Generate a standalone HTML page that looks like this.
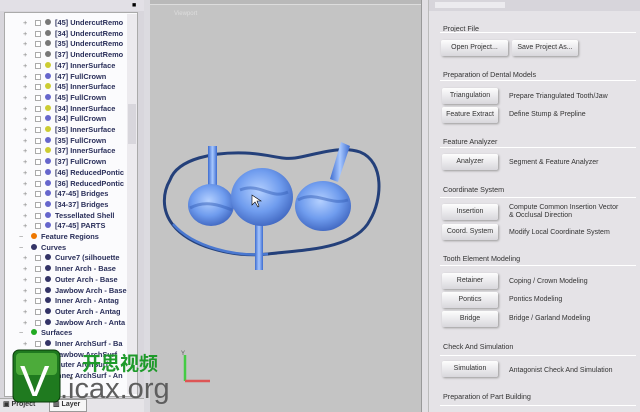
<!DOCTYPE html>
<html><head><meta charset="utf-8"><style>
*{margin:0;padding:0;box-sizing:border-box}
body{width:640px;height:412px;overflow:hidden;background:#c4c4c4;font-family:"Liberation Sans",sans-serif;position:relative}
.abs{position:absolute}
#left{left:0;top:0;width:144px;height:412px;background:#d8d6dc}
#tree{left:4px;top:12px;width:134px;height:385px;background:#fbfbfd;border:1px solid #aaa;overflow:hidden}
.row{position:absolute;height:11px;font-size:7.4px;font-weight:bold;color:#2a2f5a;white-space:nowrap;line-height:11px}
.row i{display:inline-block;width:6px;height:6px;border:1px solid #aaa;background:#fff;margin-right:4px;vertical-align:-1px}
.row b{display:inline-block;width:6px;height:6px;border-radius:50%;margin-right:4px;vertical-align:0}
.row s{display:inline-block;color:#888;text-decoration:none;width:12px;font-weight:normal}
#sb{left:127px;top:14px;width:10px;height:380px;background:#eceaee}
#right{left:428px;top:0;width:212px;height:412px;background:#e5e3e7;border-left:1px solid #bbb}
.hd{position:absolute;left:443px;font-size:7.2px;color:#333}
.ln{position:absolute;left:440px;width:196px;height:1px;background:#c8c6cc;border-bottom:1px solid #fff}
.bt{position:absolute;height:16px;font-size:7px;color:#333;text-align:center;line-height:16px;border-radius:2px;background:linear-gradient(#fdfdfd,#d8d7dc);box-shadow:1px 1px 2px #999}
.tx{position:absolute;left:509px;font-size:7px;color:#333;line-height:8px}
</style></head><body>
<div class="abs" style="left:144px;top:0;width:6px;height:412px;background:#dcdbe0"></div>
<div class="abs" style="left:150px;top:0;width:274px;height:5px;background:#b9b9b9;border-bottom:1px solid #ddd"></div>
<div class="abs" style="left:174px;top:11px;font-size:6px;color:#ddd">Viewport</div>
<div class="abs" style="left:421px;top:0;width:7px;height:412px;background:#e2e0e4;border-left:1px solid #999"></div>

<div id="left" class="abs">
<div class="abs" style="left:0;top:0;width:144px;height:11px;background:#e2e0e6"></div>
<div class="abs" style="left:132px;top:2px;font-size:7px">■</div>
<div id="tree" class="abs"></div>
<div id="sb" class="abs"><div class="abs" style="left:1px;top:90px;width:8px;height:40px;background:#d8d6dc"></div></div>
<div class="abs" style="left:0;top:398px;width:144px;height:14px;background:#e6e4e8;border-top:1px solid #aaa"></div>
<div class="abs" style="left:3px;top:400px;font-size:7px;font-weight:bold;color:#333">▣ Project</div>
<div class="abs" style="left:49px;top:399px;width:38px;height:13px;border:1px solid #999;background:#f6f6f6;font-size:7px;font-weight:bold;color:#333;padding-left:3px">▥ Layer</div>
</div>

<div id="right" class="abs">
<div class="abs" style="left:0;top:0;width:212px;height:11px;background:#d7d5db"></div>
<div class="abs" style="left:6px;top:2px;width:70px;height:6px;background:#ecebef"></div>
</div>
<div class="hd" style="top:24px">Project File</div><div class="ln" style="top:32px"></div>
<div class="bt" style="left:441px;top:40px;width:67px">Open Project...</div>
<div class="bt" style="left:512px;top:40px;width:66px">Save Project As...</div>
<div class="hd" style="top:70px">Preparation of Dental Models</div><div class="ln" style="top:80px"></div>
<div class="bt" style="left:442px;top:88px;width:56px">Triangulation</div><div class="tx" style="top:93px">Prepare Triangulated Tooth/Jaw</div>
<div class="bt" style="left:442px;top:107px;width:56px">Feature Extract</div><div class="tx" style="top:111px">Define Stump &amp; Prepline</div>
<div class="hd" style="top:137px">Feature Analyzer</div><div class="ln" style="top:147px"></div>
<div class="bt" style="left:442px;top:154px;width:56px">Analyzer</div><div class="tx" style="top:159px">Segment &amp; Feature Analyzer</div>
<div class="hd" style="top:185px">Coordinate System</div><div class="ln" style="top:197px"></div>
<div class="bt" style="left:442px;top:204px;width:56px">Insertion</div><div class="tx" style="top:204px">Compute Common Insertion Vector<br>&amp; Occlusal Direction</div>
<div class="bt" style="left:442px;top:224px;width:56px">Coord. System</div><div class="tx" style="top:229px">Modify Local Coordinate System</div>
<div class="hd" style="top:254px">Tooth Element Modeling</div><div class="ln" style="top:265px"></div>
<div class="bt" style="left:442px;top:273px;width:56px">Retainer</div><div class="tx" style="top:278px">Coping / Crown Modeling</div>
<div class="bt" style="left:442px;top:292px;width:56px">Pontics</div><div class="tx" style="top:296px">Pontics Modeling</div>
<div class="bt" style="left:442px;top:311px;width:56px">Bridge</div><div class="tx" style="top:315px">Bridge / Garland Modeling</div>
<div class="hd" style="top:342px">Check And Simulation</div><div class="ln" style="top:355px"></div>
<div class="bt" style="left:442px;top:361px;width:56px">Simulation</div><div class="tx" style="top:367px">Antagonist Check And Simulation</div>
<div class="hd" style="top:392px">Preparation of Part Building</div><div class="ln" style="top:405px"></div>

<svg class="abs" style="left:0;top:0" width="640" height="412">
<defs>
<radialGradient id="g" cx="45%" cy="40%" r="65%"><stop offset="0" stop-color="#b4d0ff"/><stop offset=".55" stop-color="#6f9cee"/><stop offset="1" stop-color="#3c62bc"/></radialGradient>
<linearGradient id="p" x1="0" x2="1"><stop offset="0" stop-color="#3d6cd0"/><stop offset=".5" stop-color="#a8c8ff"/><stop offset="1" stop-color="#3d6cd0"/></linearGradient>
</defs>
<path d="M170 180 C178 158 215 152 245 153 C270 154 280 160 295 158 C315 155 340 145 360 152 C385 162 382 200 370 220 C355 250 300 250 268 254 C230 258 188 245 173 225 C161 210 163 192 170 180 Z" fill="none" stroke="#24407a" stroke-width="3"/>
<path d="M173 224 C193 247 235 257 268 254" fill="none" stroke="#4a78d0" stroke-width="2.5"/>
<rect x="208" y="146" width="9" height="40" fill="url(#p)"/>
<rect x="255" y="220" width="8" height="50" fill="url(#p)"/>
<path d="M341 142 L350 146 L338 182 L330 179 Z" fill="url(#p)"/>
<ellipse cx="211" cy="205" rx="23" ry="21" fill="url(#g)"/>
<ellipse cx="323" cy="206" rx="28" ry="25" fill="url(#g)"/>
<ellipse cx="262" cy="197" rx="31" ry="29" fill="url(#g)"/>
<path d="M190 208 C205 200 220 205 232 210 M298 200 C315 190 330 206 348 200 M240 190 C260 182 270 200 288 192" stroke="#3560b8" stroke-width="3" fill="none" opacity=".5"/>
<path d="M252 195 L252 205 L255 202 L258 207 L259 206 L257 201 L261 201 Z" fill="#fff" stroke="#000" stroke-width=".6"/>
<line x1="185" y1="355" x2="185" y2="381" stroke="#4c4" stroke-width="2.5"/>
<line x1="185" y1="381" x2="210" y2="381" stroke="#d55" stroke-width="2.5"/>
<text x="181" y="355" font-size="6" fill="#555" font-family="Liberation Sans">Y</text>
<rect x="13" y="350" width="47" height="52" rx="6" fill="#1f7a1f" stroke="#0a3a0a"/>
<rect x="16" y="353" width="41" height="22" rx="4" fill="#4cab3a"/>
<text x="20" y="396" font-size="44" fill="#fff" font-family="Liberation Sans">V</text>
<text x="82" y="370" font-size="19" font-weight="bold" fill="#1e9a2a" font-family="Liberation Sans,Noto Sans CJK SC,sans-serif">开思视频</text>
<text x="60" y="398" font-size="29" fill="#5e5e5e" font-family="Liberation Sans">.icax.org</text>
</svg>
<script>
var rows=[["[45] UndercutRemo","#777",1],["[34] UndercutRemo","#777",1],["[35] UndercutRemo","#777",1],["[37] UndercutRemo","#777",1],["[47] InnerSurface","#cc3",1],["[47] FullCrown","#66c",1],["[45] InnerSurface","#cc3",1],["[45] FullCrown","#66c",1],["[34] InnerSurface","#cc3",1],["[34] FullCrown","#66c",1],["[35] InnerSurface","#cc3",1],["[35] FullCrown","#66c",1],["[37] InnerSurface","#cc3",1],["[37] FullCrown","#66c",1],["[46] ReducedPontic","#66c",1],["[36] ReducedPontic","#66c",1],["[47-45] Bridges","#66c",1],["[34-37] Bridges","#66c",1],["Tessellated Shell","#66c",1],["[47-45] PARTS","#66c",1],["Feature Regions","#e70",0],["Curves","#336",0],["Curve7 (silhouette","#336",1],["Inner Arch - Base","#336",1],["Outer Arch - Base","#336",1],["Jawbow Arch - Base","#336",1],["Inner Arch - Antag","#336",1],["Outer Arch - Antag","#336",1],["Jawbow Arch - Anta","#336",1],["Surfaces","#2a2",0],["Inner ArchSurf - Ba","#336",1],["Jawbow ArchSurf","#336",1],["Outer ArchSurf","#336",1],["Inner ArchSurf - An","#336",1]];
var t=document.getElementById('tree'),h='';
rows.forEach(function(r,i){var y=4+i*10.7;var x=r[2]?18:14;
h+='<div class="row" style="left:'+x+'px;top:'+y+'px"><s>'+(r[2]?'+':'−')+'</s>'+(r[2]?'<i></i>':'')+'<b style="background:'+r[1]+'"></b>'+r[0]+'</div>';});
t.innerHTML=h;
</script>
</body></html>
